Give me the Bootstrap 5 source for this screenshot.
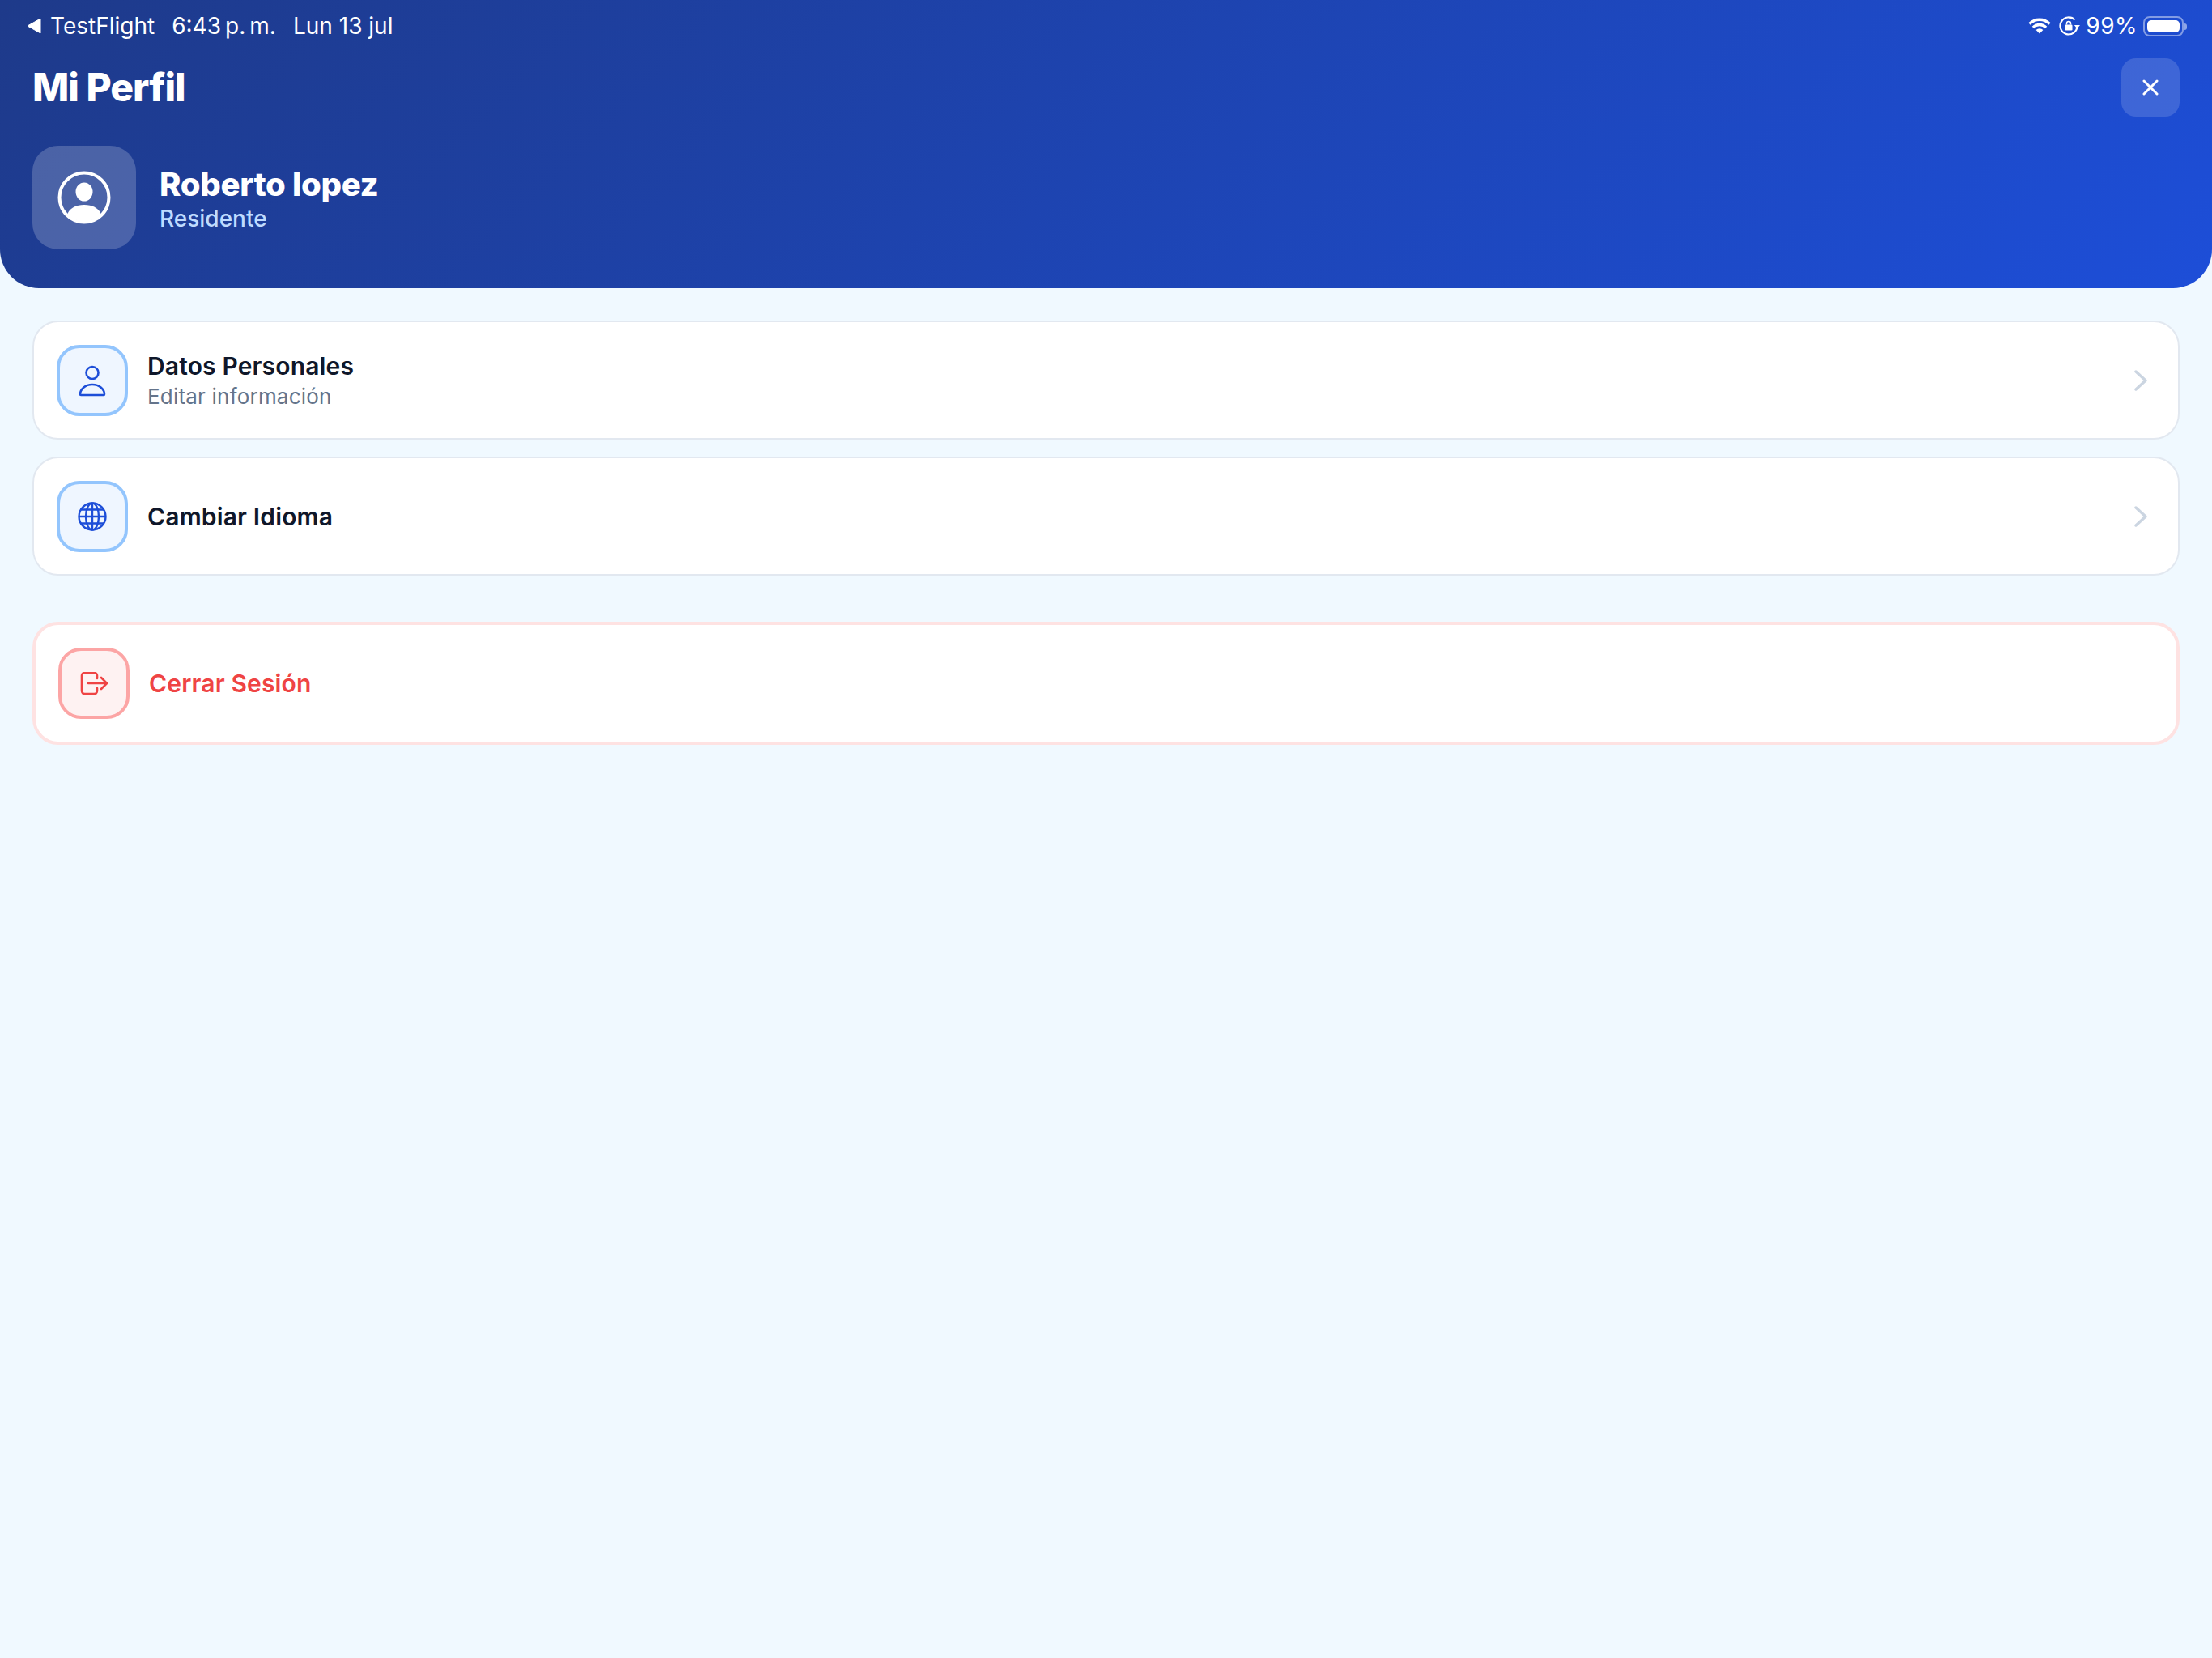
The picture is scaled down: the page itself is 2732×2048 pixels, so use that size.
<!DOCTYPE html>
<html lang="es">
<head>
    <meta charset="UTF-8">
    <meta name="viewport" content="width=device-width, initial-scale=1.0">
    <title>Mi Perfil</title>
    <link href="https://cdn.jsdelivr.net/npm/bootstrap@5.3.0/dist/css/bootstrap.min.css" rel="stylesheet">
    <style>
        html, body { height: 100%; }
        body {
            background-color: #f0f9ff;
            font-family: Inter, "Liberation Sans", sans-serif;
        }
        .profile-header {
            height: 356px;
            background: linear-gradient(135deg, #1e3a8a 0%, #1d4ed8 100%);
            border-radius: 0 0 48px 48px;
            color: #fff;
        }
        .status-bar {
            height: 64px;
            padding: 0 30px 0 33px;
            font-size: 28px;
            line-height: 1;
            color: #fff;
        }
        .status-left { gap: 21px; }
        .status-back { gap: 11px; }
        .status-right { gap: 10px; }
        .status-pct {
            letter-spacing: .5px;
            margin: 0 -3px;
        }
        .battery {
            width: 50px;
            height: 25px;
            padding: 3px;
            border: 2px solid rgba(255, 255, 255, .45);
            border-radius: 8px;
            margin-right: 5px;
        }
        .battery-level {
            background: #fff;
            border-radius: 5px;
            height: 100%;
        }
        .battery::after {
            content: "";
            position: absolute;
            right: -6px;
            top: 7px;
            width: 3px;
            height: 8px;
            border-radius: 0 3px 3px 0;
            background: rgba(255, 255, 255, .5);
        }
        .title-row {
            padding: 8px 40px 0;
            height: 80px;
        }
        .page-title {
            font-size: 48px;
            font-weight: 800;
            margin: 0;
            letter-spacing: -1px;
        }
        .close-tile {
            width: 72px;
            height: 72px;
            border: 0;
            border-radius: 18px;
            background: rgba(255, 255, 255, .15);
        }
        .user-row {
            padding: 36px 40px 0;
            gap: 29px;
        }
        .avatar-tile {
            width: 128px;
            height: 128px;
            border-radius: 32px;
            background: rgba(255, 255, 255, .2);
        }
        .user-info { padding-top: 3px; }
        .user-name {
            font-size: 40px;
            font-weight: 800;
            line-height: 48px;
            letter-spacing: -.3px;
        }
        .user-role {
            font-size: 28px;
            font-weight: 500;
            line-height: 36px;
            color: #bfdbfe;
        }
        .menu-wrap {
            padding: 40px 40px 0;
            gap: 21px;
        }
        .menu-card {
            height: 147px;
            border: 2px solid #e2e8f0;
            border-radius: 32px;
            background: #fff;
            padding: 0 38px 0 28px;
            gap: 24px;
        }
        .menu-card.danger-card {
            height: 152px;
            margin-top: 36px;
            border: 4px solid #fee2e2;
        }
        .icon-tile {
            width: 88px;
            height: 88px;
            border: 4px solid #93c5fd;
            border-radius: 28px;
            background: #eff6ff;
        }
        .danger-card .icon-tile {
            border-color: #fca5a5;
            background: #fef2f2;
        }
        .menu-title {
            font-size: 30px;
            font-weight: 600;
            line-height: 38px;
            letter-spacing: .15px;
            color: #0f172a;
        }
        .danger-card .menu-title { color: #ef4444; }
        .menu-sub {
            font-size: 26px;
            line-height: 34px;
            margin-top: 2px;
            letter-spacing: .2px;
            color: #64748b;
        }
    </style>
</head>
<body>
    <!-- Header -->
    <header class="profile-header">
        <div class="status-bar d-flex justify-content-between align-items-center">
            <div class="status-left d-flex align-items-center">
                <div class="status-back d-flex align-items-center">
                    <svg width="18" height="20" viewBox="0 0 18 20"><path d="M17 1v18L1 10z" fill="#fff" stroke="#fff" stroke-linejoin="round"/></svg>
                    <span>TestFlight</span>
                </div>
                <span>6:43&#8201;p.&#8201;m.</span>
                <span>Lun 13 jul</span>
            </div>
            <div class="status-right d-flex align-items-center">
                <svg width="28" height="20" viewBox="0 0 28 20" fill="none" stroke="#fff" stroke-width="3.4">
                    <path d="M1.5 7.5a17.5 17.5 0 0 1 25 0"/>
                    <path d="M6 12a11 11 0 0 1 16 0"/>
                    <path d="M14 19.5l-4.4-4.4a6.2 6.2 0 0 1 8.8 0z" fill="#fff" stroke="none"/>
                </svg>
                <svg width="26" height="24" viewBox="0 0 26 24" fill="none">
                    <path d="M22.5 12a10.5 10.5 0 1 1-3-7.4" stroke="#fff" stroke-width="2.2"/>
                    <path d="M26 11l-3.6 4.5L18.8 11z" fill="#fff"/>
                    <rect x="7.5" y="10.5" width="9" height="7" rx="1.2" fill="#fff"/>
                    <path d="M9.5 10.5V9a2.5 2.5 0 0 1 5 0v1.500" stroke="#fff" stroke-width="1.500"/>
                </svg>
                <span class="status-pct">99%</span>
                <div class="battery position-relative"><div class="battery-level"></div></div>
            </div>
        </div>
        <div class="title-row d-flex justify-content-between align-items-center">
            <h1 class="page-title">Mi Perfil</h1>
            <button class="close-tile d-flex align-items-center justify-content-center" type="button" aria-label="Cerrar">
                <svg width="20" height="20" viewBox="0 0 20 20" fill="none" stroke="#fff" stroke-width="3" stroke-linecap="round"><path d="M2 2l16 16M18 2L2 18"/></svg>
            </button>
        </div>
        <div class="user-row d-flex align-items-center">
            <div class="avatar-tile d-flex align-items-center justify-content-center">
                <svg width="66" height="66" viewBox="0 0 66 66">
                    <circle cx="33" cy="33" r="30.500" fill="none" stroke="#fff" stroke-width="4"/>
                    <ellipse cx="33" cy="26" rx="10.500" ry="11.500" fill="#fff"/>
                    <path d="M12 54c3-8 11-12 21-12s18 4 21 12a30.500 30.500 0 0 1-42 0z" fill="#fff"/>
                </svg>
            </div>
            <div class="user-info">
                <div class="user-name">Roberto lopez</div>
                <div class="user-role">Residente</div>
            </div>
        </div>
    </header>

    <!-- Menu -->
    <main class="menu-wrap d-flex flex-column">
        <div class="menu-card card flex-row align-items-center">
            <div class="icon-tile d-flex align-items-center justify-content-center flex-shrink-0">
                <svg width="36" height="40" viewBox="0 0 36 40" fill="none" stroke="#1d4ed8" stroke-width="2.6" stroke-linejoin="round">
                    <circle cx="18" cy="10.500" r="7.500"/>
                    <path d="M3 37c0-6 6-12 15-12s15 6 15 12c0 .6-.4 1-1 1H4c-.6 0-1-.4-1-1z"/>
                </svg>
            </div>
            <div class="flex-grow-1">
                <div class="menu-title">Datos Personales</div>
                <div class="menu-sub">Editar información</div>
            </div>
            <svg width="16" height="26" viewBox="0 0 16 26" fill="none" stroke="#cbd5e1" stroke-width="3.5" stroke-linecap="round" stroke-linejoin="round"><path d="M2 2l12 11L2 24"/></svg>
        </div>
        <div class="menu-card card flex-row align-items-center">
            <div class="icon-tile d-flex align-items-center justify-content-center flex-shrink-0">
                <svg width="36" height="36" viewBox="0 0 36 36" fill="none" stroke="#1d4ed8" stroke-width="2.4">
                    <circle cx="18" cy="18" r="16.500"/>
                    <ellipse cx="18" cy="18" rx="8" ry="16.500"/>
                    <path d="M18 1.500v33M1.500 18h33M4 9.500h28M4 26.500h28"/>
                </svg>
            </div>
            <div class="flex-grow-1">
                <div class="menu-title">Cambiar Idioma</div>
            </div>
            <svg width="16" height="26" viewBox="0 0 16 26" fill="none" stroke="#cbd5e1" stroke-width="3.5" stroke-linecap="round" stroke-linejoin="round"><path d="M2 2l12 11L2 24"/></svg>
        </div>
        <div class="menu-card danger-card card flex-row align-items-center">
            <div class="icon-tile d-flex align-items-center justify-content-center flex-shrink-0">
                <svg width="34" height="28" viewBox="0 0 34 28" fill="none" stroke="#ef4444" stroke-width="2.600" stroke-linecap="round" stroke-linejoin="round">
                    <path d="M21 8V4.500A3.500 3.500 0 0 0 17.500 1h-12A3.500 3.500 0 0 0 2 4.500v19A3.500 3.500 0 0 0 5.500 27h12a3.500 3.500 0 0 0 3.500-3.500V20"/>
                    <path d="M10 14h23M26 7l7 7-7 7"/>
                </svg>
            </div>
            <div class="menu-title">Cerrar Sesión</div>
        </div>
    </main>

    <script src="https://cdn.jsdelivr.net/npm/bootstrap@5.3.0/dist/js/bootstrap.bundle.min.js"></script>
</body>
</html>
